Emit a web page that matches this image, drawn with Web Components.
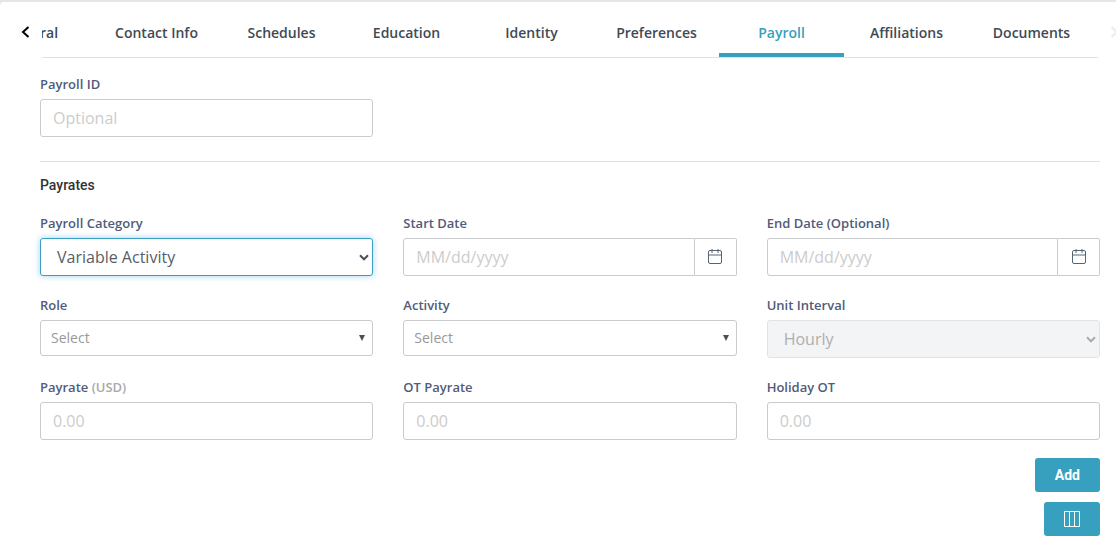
<!DOCTYPE html>
<html lang="en">
<head>
<meta charset="utf-8">
<meta name="viewport" content="width=device-width, initial-scale=1">
<title>Payroll</title>
<style>
  :root {
    --font-sans: "Open Sans", "Noto Sans", sans-serif;
    --font-heading: Roboto, sans-serif;
    --color-primary: #38a0bf;
    --color-border: #c9cbcc;
    --color-rule: #dee2e3;
    --color-label: #515b7a;
    --color-text: #565e68;
    --color-placeholder: #cccccc;
    --radius: 3px;
  }
  * { box-sizing: border-box; }
  body {
    margin: 0;
    padding-top: 2px;
    min-height: 100vh;
    background: #e3e7ea;
    font-family: var(--font-sans);
    color: var(--color-text);
  }
</style>
</head>
<body>
<profile-card>
  <tab-strip slot="tabs" active="Payroll" tabs="General,Contact Info,Schedules,Education,Identity,Preferences,Payroll,Affiliations,Documents"></tab-strip>
  <payroll-form></payroll-form>
</profile-card>

<script>
class ProfileCard extends HTMLElement {
  constructor() {
    super();
    this.attachShadow({ mode: 'open' });
    this.shadowRoot.innerHTML = `
      <style>
        :host {
          display: block;
          box-sizing: border-box;
          min-height: calc(100vh - 2px);
          background: #fff;
          border-top-left-radius: 4px;
          overflow: hidden;
        }
        main {
          padding: 16px 16px 5px 40px;
        }
      </style>
      <slot name="tabs"></slot>
      <main><slot></slot></main>
    `;
  }
}

class TabStrip extends HTMLElement {
  constructor() {
    super();
    this.attachShadow({ mode: 'open' });
  }

  connectedCallback() {
    this.render();
    // keep the last tabs in view
    const scroller = this.shadowRoot.querySelector('.scroller');
    scroller.scrollLeft = scroller.scrollWidth;
  }

  render() {
    const active = this.getAttribute('active');
    const tabs = (this.getAttribute('tabs') || '').split(',');

    this.shadowRoot.innerHTML = `
      <style>
        :host {
          display: flex;
          height: 56px;
        }
        .arrow {
          flex: none;
          box-sizing: border-box;
          padding: 4px 0 0;
          border: 0;
          background: none;
          color: #000;
          text-align: left;
        }
        .arrow svg {
          display: block;
        }
        .prev {
          width: 42px;
          padding-left: 21px;
        }
        .next {
          width: 18px;
          padding-left: 12px;
          color: #ececec;
        }
        .scroller {
          flex: 1;
          min-width: 0;
          display: flex;
          box-sizing: border-box;
          border-bottom: 1px solid var(--color-rule);
          overflow: hidden;
        }
        .tab {
          flex: none;
          box-sizing: border-box;
          width: 125px;
          padding: 12px 0 2px;
          border: 0;
          border-bottom: 4px solid transparent;
          background: none;
          font: 600 14px/20px var(--font-sans);
          color: #3f4a54;
        }
        .tab:last-child {
          margin-right: 4px;
        }
        .tab[aria-selected="true"] {
          border-bottom-color: var(--color-primary);
          color: var(--color-primary);
        }
      </style>
      <button class="arrow prev" aria-label="Previous tabs">
        <svg width="9" height="12" viewBox="0 0 9 12" fill="none" stroke="currentColor" stroke-width="2"><path d="M7.500 1L2 6l5.500 5"/></svg>
      </button>
      <div class="scroller" role="tablist">
        ${tabs.map(tab => `<button class="tab" role="tab" aria-selected="${tab === active}">${tab}</button>`).join('')}
      </div>
      <button class="arrow next" aria-label="Next tabs" disabled>
        <svg width="9" height="12" viewBox="0 0 9 12" fill="none" stroke="currentColor" stroke-width="2"><path d="M1.500 1L7 6l-5.500 5"/></svg>
      </button>
    `;
  }
}

// shared look of the text boxes and drop-downs
const fieldStyles = `
  :host {
    display: block;
    min-width: 0;
  }
  label {
    display: block;
    margin-bottom: 5px;
    font-size: 13px;
    line-height: 20px;
    font-weight: 600;
    color: var(--color-label);
  }
  label .note {
    color: #a9a9a9;
  }
  input, select {
    display: block;
    box-sizing: border-box;
    width: 100%;
    height: 38px;
    margin: 0;
    padding: 0 12px;
    border: 1px solid var(--color-border);
    border-radius: var(--radius);
    background: #fff;
    font: 400 16px/24px var(--font-sans);
    color: var(--color-text);
    outline: 0;
  }
  input::placeholder {
    color: var(--color-placeholder);
    opacity: 1;
  }
`;

class TextField extends HTMLElement {
  constructor() {
    super();
    this.attachShadow({ mode: 'open' });
  }

  connectedCallback() {
    const label = this.getAttribute('label');
    const note = this.getAttribute('note');
    const placeholder = this.getAttribute('placeholder') || '';

    this.shadowRoot.innerHTML = `
      <style>${fieldStyles}</style>
      <label for="field">${label}${note ? ` <span class="note">${note}</span>` : ''}</label>
      <input id="field" type="text" placeholder="${placeholder}">
    `;
  }
}

class DateField extends HTMLElement {
  constructor() {
    super();
    this.attachShadow({ mode: 'open' });
  }

  connectedCallback() {
    this.shadowRoot.innerHTML = `
      <style>
        ${fieldStyles}
        .group {
          display: flex;
        }
        input {
          flex: 1;
          min-width: 0;
          border-radius: var(--radius) 0 0 var(--radius);
        }
        button {
          display: flex;
          align-items: center;
          justify-content: center;
          flex: none;
          box-sizing: border-box;
          width: 42px;
          padding: 0 0 2px;
          border: 1px solid var(--color-border);
          border-left: 0;
          border-radius: 0 2px 2px 0;
          background: #fff;
          color: #566573;
        }
      </style>
      <label for="field">${this.getAttribute('label')}</label>
      <div class="group">
        <input id="field" type="text" placeholder="MM/dd/yyyy">
        <button aria-label="Open calendar">
          <svg width="14" height="15" viewBox="0 0 14 15" fill="none" stroke="currentColor">
            <rect x="0.500" y="1.500" width="13" height="13" rx="1.500"/>
            <path d="M0.500 6h13M4 0v4M10 0v4"/>
          </svg>
        </button>
      </div>
    `;
  }
}

class SelectField extends HTMLElement {
  constructor() {
    super();
    this.attachShadow({ mode: 'open' });
  }

  connectedCallback() {
    const compact = this.hasAttribute('compact');
    const disabled = this.hasAttribute('disabled');
    const arrow = compact
      ? '<svg width="6" height="6" viewBox="0 0 6 6"><path d="M0 0h6L3 6z" fill="currentColor"/></svg>'
      : '<svg width="10" height="7" viewBox="0 0 10 7"><path d="M1 1.300l4 4 4-4" fill="none" stroke="currentColor" stroke-width="2"/></svg>';

    this.shadowRoot.innerHTML = `
      <style>
        ${fieldStyles}
        .box {
          position: relative;
          color: #4a5057;
        }
        select {
          appearance: none;
          padding: 0 24px 0 16px;
        }
        .box svg {
          position: absolute;
          top: 0;
          bottom: 0;
          right: 4px;
          margin: auto 0;
          pointer-events: none;
        }
        :host([highlighted]) select {
          border-color: var(--color-primary);
          box-shadow: 0 0 6px rgba(102, 175, 233, 0.6);
        }
        :host([disabled]) select {
          border-color: #e1e3e4;
          background: #f3f4f6;
          color: #adafb0;
          opacity: 1;
        }
        :host([disabled]) .box {
          color: #a9abad;
        }
        :host([compact]) select {
          height: 36px;
          padding: 0 24px 0 10px;
          font-size: 14px;
          color: #999;
        }
        :host([compact]) svg {
          right: 8px;
        }
      </style>
      <label for="field">${this.getAttribute('label')}</label>
      <div class="box">
        <select id="field" ${disabled ? 'disabled' : ''}>
          <option>${this.getAttribute('value')}</option>
        </select>
        ${arrow}
      </div>
    `;
  }
}

class ActionButton extends HTMLElement {
  constructor() {
    super();
    this.attachShadow({ mode: 'open' });
    this.shadowRoot.innerHTML = `
      <style>
        :host {
          display: block;
        }
        button {
          display: flex;
          align-items: center;
          justify-content: center;
          height: 34px;
          padding: 0 20px;
          border: 0;
          border-radius: var(--radius);
          background: var(--color-primary);
          font: 700 14px/20px var(--font-heading);
          color: #fff;
        }
      </style>
      <button type="button"><slot></slot></button>
    `;
  }

  connectedCallback() {
    if (this.hasAttribute('label')) {
      this.shadowRoot.querySelector('button').setAttribute('aria-label', this.getAttribute('label'));
    }
  }
}

class PayrollForm extends HTMLElement {
  constructor() {
    super();
    this.attachShadow({ mode: 'open' });
    this.shadowRoot.innerHTML = `
      <style>
        :host {
          display: block;
        }
        .grid {
          display: grid;
          grid-template-columns: repeat(3, minmax(0, 1fr));
          gap: 19px 30px;
        }
        hr {
          margin: 24px 0 12px;
          border: 0;
          border-top: 1px solid var(--color-rule);
        }
        h2 {
          margin: 0 0 17px;
          font: 500 14px/22px var(--font-heading);
          color: #333;
        }
        .actions {
          display: flex;
          flex-direction: column;
          align-items: flex-end;
          gap: 10px;
          margin-top: 18px;
        }
        .actions svg {
          display: block;
        }
      </style>
      <div class="grid">
        <text-field label="Payroll ID" placeholder="Optional"></text-field>
      </div>
      <hr>
      <h2>Payrates</h2>
      <div class="grid">
        <select-field label="Payroll Category" value="Variable Activity" highlighted></select-field>
        <date-field label="Start Date"></date-field>
        <date-field label="End Date (Optional)"></date-field>
        <select-field label="Role" value="Select" compact></select-field>
        <select-field label="Activity" value="Select" compact></select-field>
        <select-field label="Unit Interval" value="Hourly" disabled></select-field>
        <text-field label="Payrate" note="(USD)" placeholder="0.00"></text-field>
        <text-field label="OT Payrate" placeholder="0.00"></text-field>
        <text-field label="Holiday OT" placeholder="0.00"></text-field>
      </div>
      <div class="actions">
        <action-button>Add</action-button>
        <action-button label="Choose columns">
          <svg width="16" height="16" viewBox="0 0 16 16" fill="none" stroke="currentColor"><path d="M0.500 0.500h15v15h-15zM5.500 0.500v15M10.500 0.500v15"/></svg>
        </action-button>
      </div>
    `;
  }
}

customElements.define('profile-card', ProfileCard);
customElements.define('tab-strip', TabStrip);
customElements.define('text-field', TextField);
customElements.define('date-field', DateField);
customElements.define('select-field', SelectField);
customElements.define('action-button', ActionButton);
customElements.define('payroll-form', PayrollForm);
</script>
</body>
</html>
